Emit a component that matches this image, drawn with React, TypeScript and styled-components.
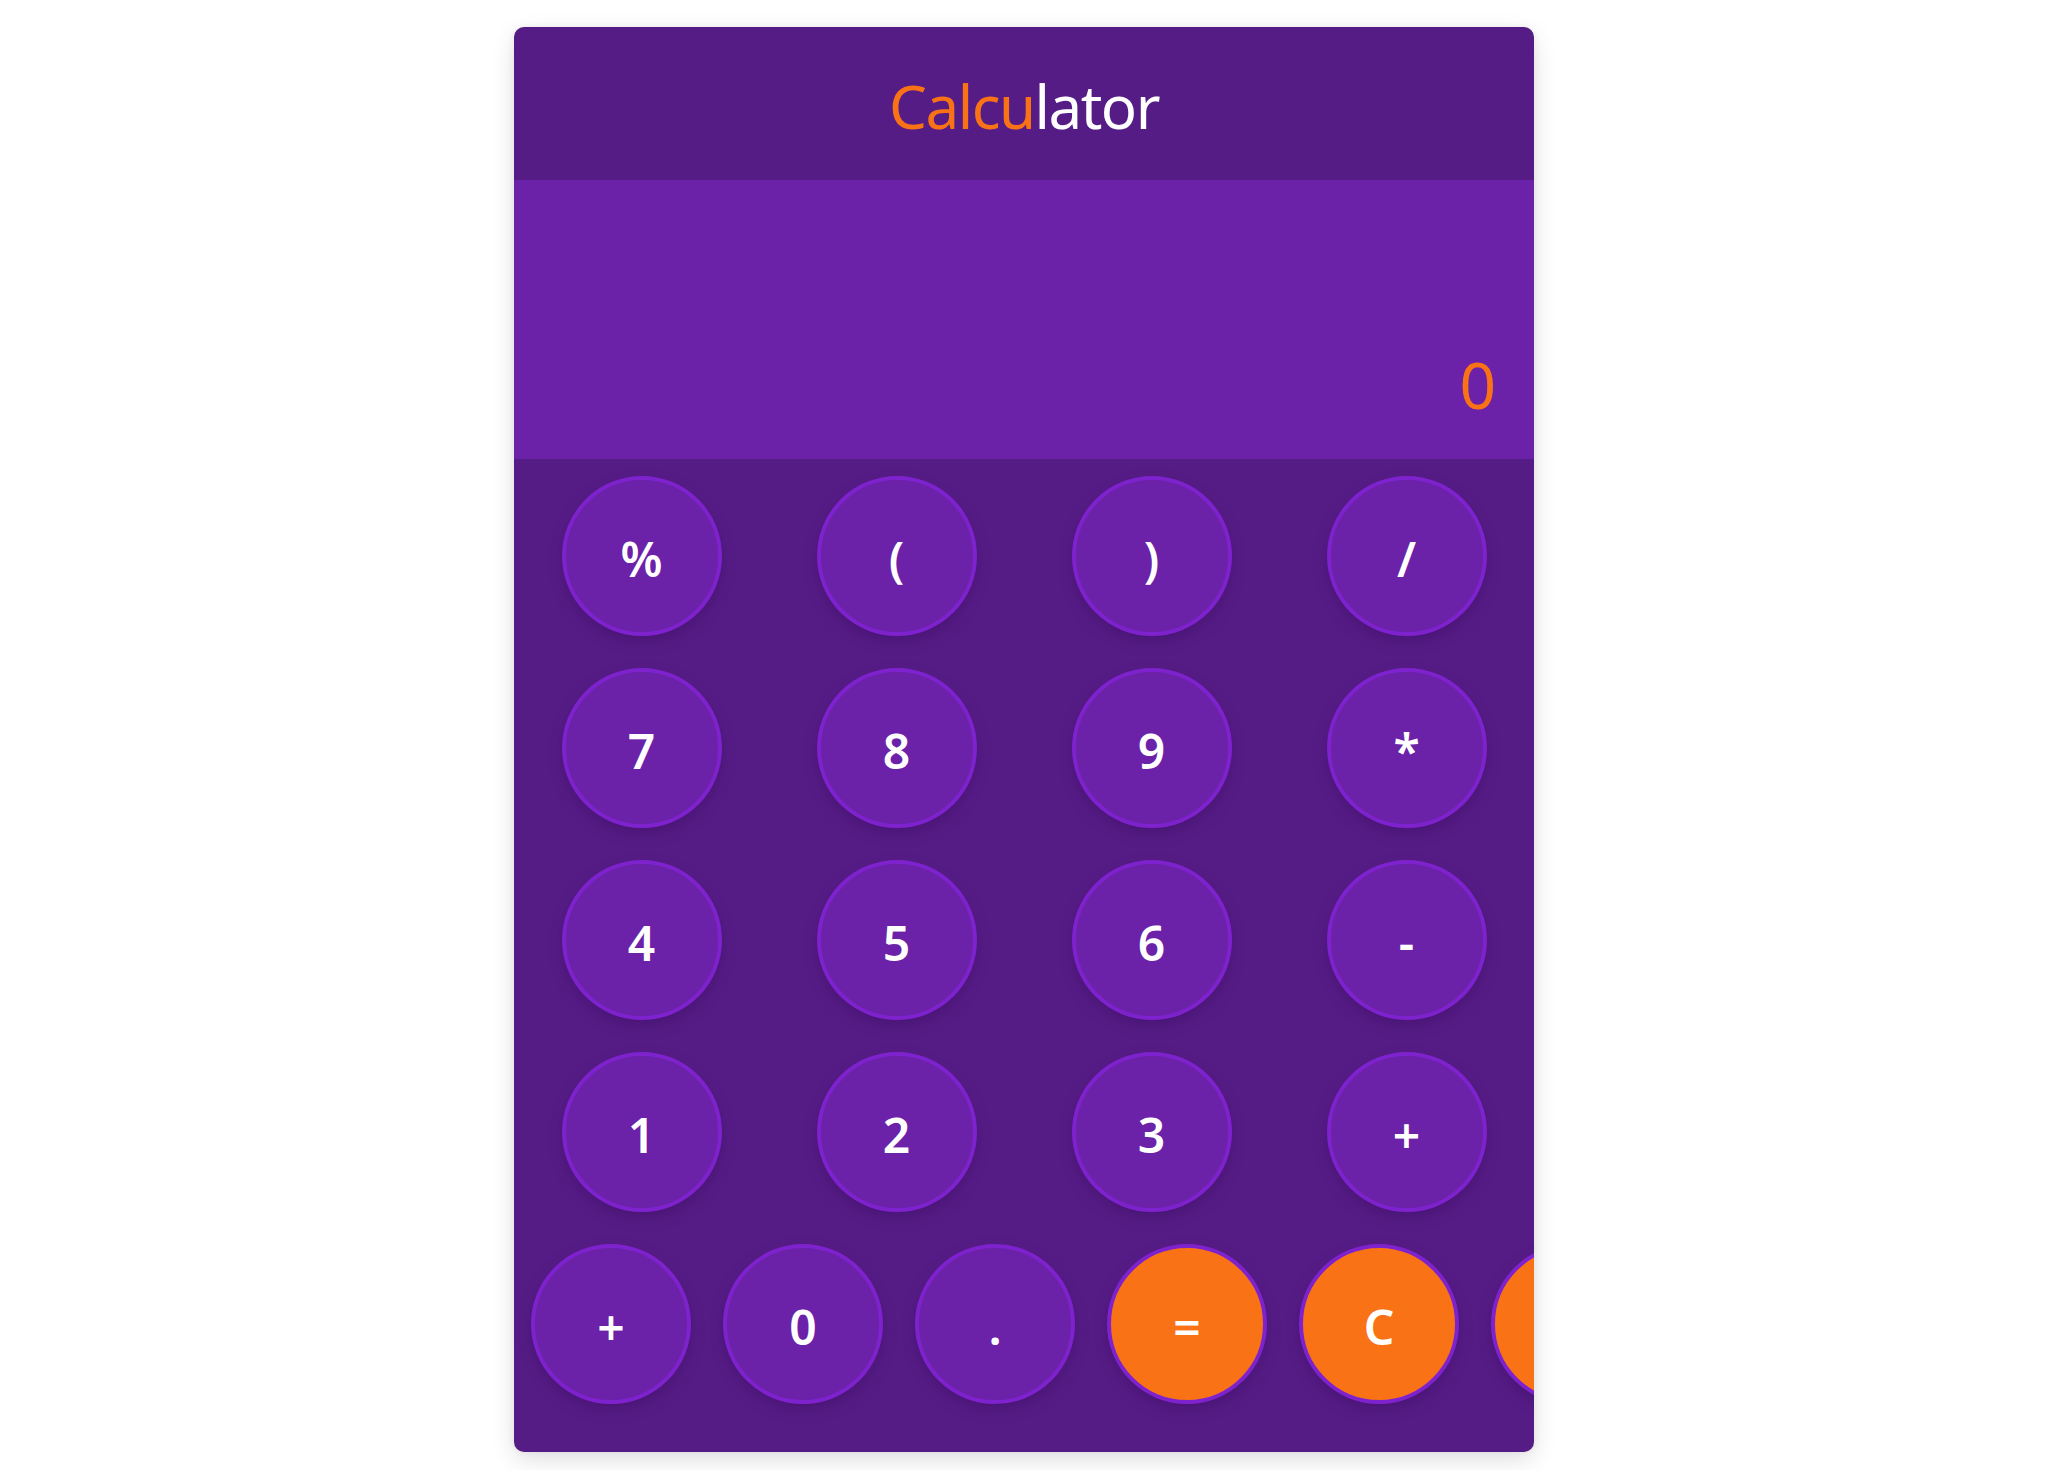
import React, { useState } from "react";
import styled, { createGlobalStyle } from "styled-components";

const GlobalStyle = createGlobalStyle`
  html, body {
    margin: 0;
    padding: 0;
    background: #ffffff;
  }
  body {
    font-family: "Noto Sans", "Open Sans", "Liberation Sans", sans-serif;
  }
  * {
    box-sizing: border-box;
  }
`;

const PageWrapper = styled.div`
  width: 100%;
  min-height: 1470px;
  padding-top: 27px;
  display: flex;
  justify-content: center;
  align-items: flex-start;
`;

const CalculatorCard = styled.div`
  width: 1020px;
  background: #561c86;
  border-radius: 10px;
  overflow: hidden;
  box-shadow: 0 8px 24px rgba(0, 0, 0, 0.12), 0 0 6px rgba(0, 0, 0, 0.06);
  display: flex;
  flex-direction: column;
`;

const Header = styled.div`
  height: 153px;
  padding-top: 5px;
  display: flex;
  align-items: center;
  justify-content: center;

  h1 {
    margin: 0;
    font-size: 60px;
    line-height: 1;
    font-weight: 400;
    letter-spacing: -1.5px;
    color: #ffffff;

    span {
      color: #f97316;
    }
  }
`;

const Display = styled.div`
  height: 279px;
  background: #6b21a8;
  display: flex;
  flex-direction: column;
  justify-content: flex-end;
  align-items: flex-end;
  padding: 0 38px 42px;

  .result {
    font-size: 64px;
    line-height: 1;
    color: #f97316;
  }
`;

const Keypad = styled.div`
  display: grid;
  grid-template-columns: repeat(4, 1fr);
  row-gap: 32px;
  justify-items: center;
  padding-top: 17px;
`;

const BottomRow = styled.div`
  display: flex;
  gap: 32px;
  padding: 32px 0 48px 17px;
`;

const Key = styled.button<{ $accent?: boolean }>`
  width: 160px;
  height: 160px;
  flex-shrink: 0;
  border-radius: 50%;
  border: 4px solid #7e22ce;
  background: ${(props) => (props.$accent ? "#f97316" : "#6b21a8")};
  color: #ffffff;
  font-family: "Noto Sans", "Open Sans", "Liberation Sans", sans-serif;
  font-size: 48px;
  font-weight: 600;
  line-height: 1;
  padding: 6px 0 0;
  display: flex;
  align-items: center;
  justify-content: center;
  box-shadow: 0 6px 14px rgba(40, 0, 70, 0.25);
  cursor: pointer;
`;

const gridKeys = ["%", "(", ")", "/", "7", "8", "9", "*", "4", "5", "6", "-", "1", "2", "3", "+"];

const bottomKeys: { label: string; accent?: boolean }[] = [
  { label: "+" },
  { label: "0" },
  { label: "." },
  { label: "=", accent: true },
  { label: "C", accent: true },
  { label: "", accent: true },
];

const App: React.FC = () => {
  const [value, setValue] = useState("0");

  const press = (key: string) => {
    if (key === "C") {
      setValue("0");
      return;
    }
    if (key === "=") {
      return;
    }
    setValue((prev) => (prev === "0" ? key : prev + key));
  };

  return (
    <>
      <GlobalStyle />
      <PageWrapper>
        <CalculatorCard>
          <Header>
            <h1>
              <span>Calcu</span>lator
            </h1>
          </Header>
          <Display>
            <div className="result">{value}</div>
          </Display>
          <Keypad>
            {gridKeys.map((key, i) => (
              <Key key={i} onClick={() => press(key)}>
                {key}
              </Key>
            ))}
          </Keypad>
          <BottomRow>
            {bottomKeys.map((key, i) => (
              <Key key={i} $accent={key.accent} onClick={() => press(key.label)}>
                {key.label}
              </Key>
            ))}
          </BottomRow>
        </CalculatorCard>
      </PageWrapper>
    </>
  );
};

export default App;
